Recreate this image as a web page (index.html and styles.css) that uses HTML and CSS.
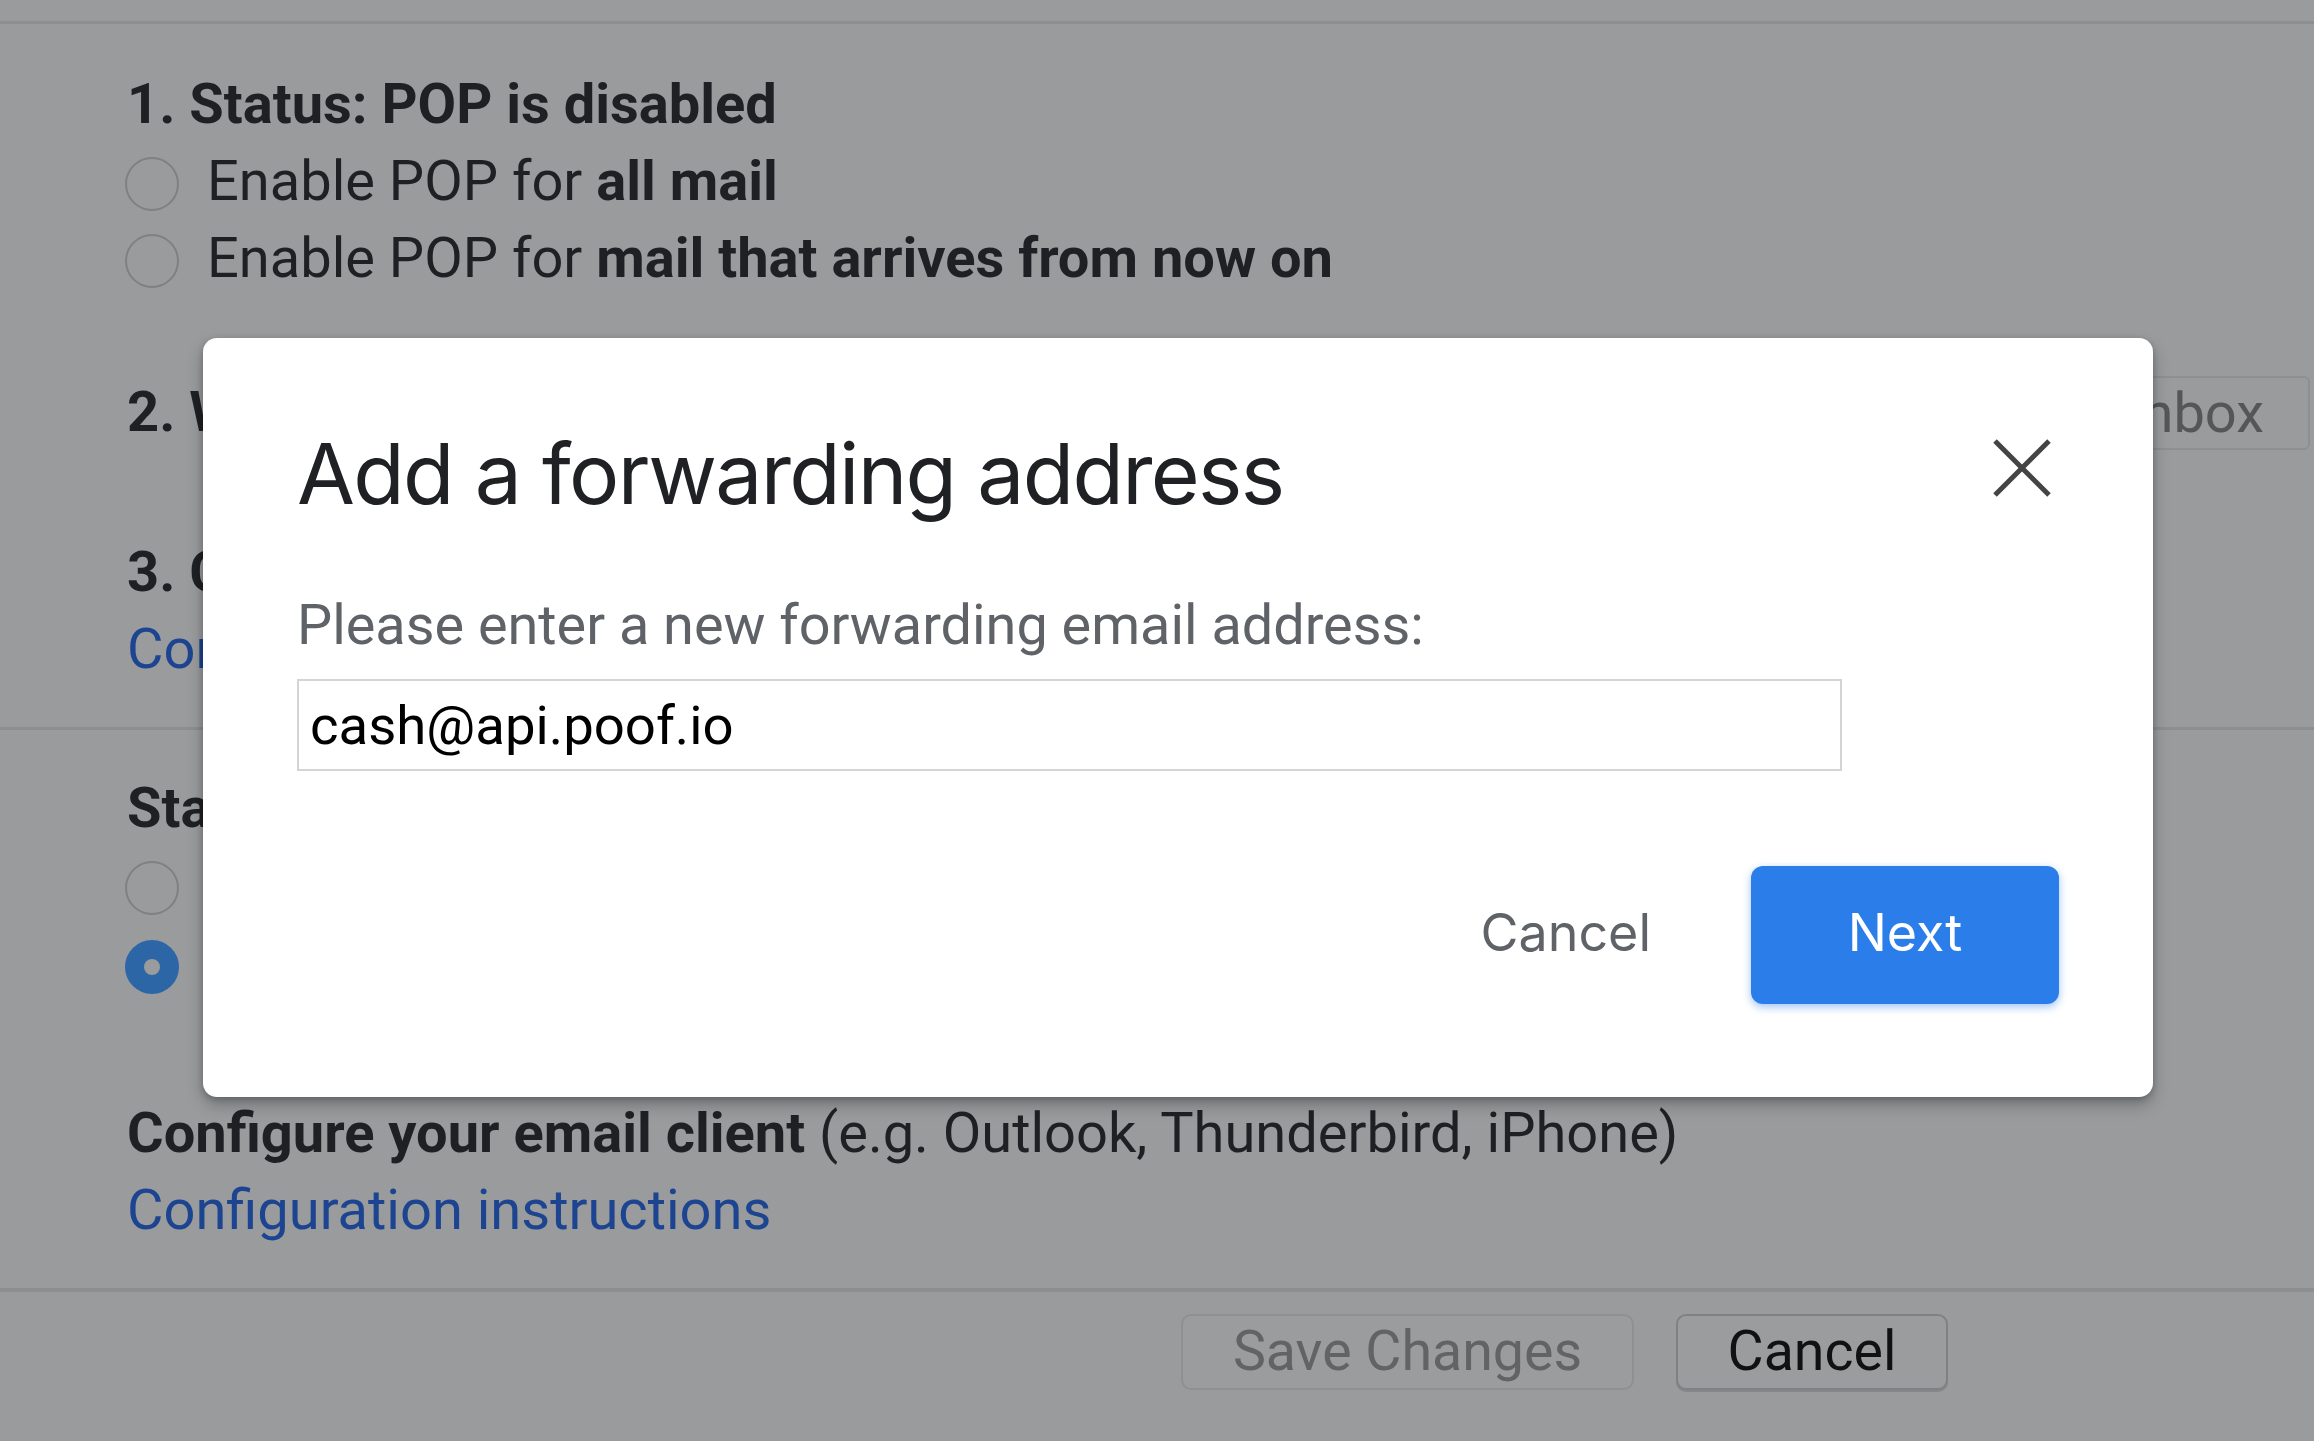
FILE: index.html
```html
<!DOCTYPE html>
<html lang="en">
<head>
<meta charset="utf-8">
<title>Forwarding and POP/IMAP</title>
<link rel="stylesheet" href="styles.css">
</head>
<body>
<div class="page">
  <div class="rule"></div>
  <section class="block pop">
    <div class="line"><b>1. Status: POP is disabled</b></div>
    <div class="opt"><span class="radio"></span><span>Enable POP for <b>all mail</b></span></div>
    <div class="opt"><span class="radio"></span><span>Enable POP for <b>mail that arrives from now on</b></span></div>
    <div class="line row2"><b>2. When messages are accessed with POP</b><span class="select">keep Gmail's copy in the Inbox</span></div>
    <div class="line row3"><b>3. Configure your email client</b> (e.g. Outlook, Eudora, Netscape Mail)</div>
    <div class="line"><a class="link">Configuration instructions</a></div>
  </section>
  <div class="rule mid"></div>
  <section class="block imap">
    <div class="line"><b>Status: IMAP is disabled</b></div>
    <div class="opt"><span class="radio"></span><span>Enable IMAP</span></div>
    <div class="opt"><span class="radio on"></span><span>Disable IMAP</span></div>
    <div class="line row4"><b>Configure your email client</b> (e.g. Outlook, Thunderbird, iPhone)</div>
    <div class="line"><a class="link">Configuration instructions</a></div>
  </section>
  <div class="rule bottom"></div>
  <div class="actions">
    <button class="btn save">Save Changes</button>
    <button class="btn cancel">Cancel</button>
  </div>
</div>

<div class="dialog" role="dialog">
  <div class="dhead">
    <h1 class="dtitle">Add a forwarding address</h1>
    <button class="close" aria-label="Close">
      <svg width="58" height="58" viewBox="0 0 58 58"><path d="M2 2 L56 56 M56 2 L2 56" stroke="#444" stroke-width="5" fill="none"/></svg>
    </button>
  </div>
  <p class="dsub">Please enter a new forwarding email address:</p>
  <div class="input">cash@api.poof.io</div>
  <div class="dfoot">
    <button class="dcancel">Cancel</button>
    <button class="next">Next</button>
  </div>
</div>
</body>
</html>
```

FILE: styles.css
```css
* { box-sizing: border-box; margin: 0; padding: 0; }
html, body { width: 2314px; height: 1441px; overflow: hidden; }
body {
  background: #9a9b9d;
  font-family: Roboto, "Liberation Sans", sans-serif;
  font-size: 56px;
  line-height: 77px;
  color: #1f2023;
  position: relative;
}
.rule { margin-top: 21px; height: 3px; background: #8d8e90; }
.rule.mid { margin-top: 39px; }
.rule.bottom { margin-top: 39px; height: 4px; }
.block { padding-left: 127px; }
.pop { padding-top: 42px; }
.imap { padding-top: 40px; }
.line { height: 77px; white-space: nowrap; }
.opt { height: 77px; display: flex; align-items: center; white-space: nowrap; }
.radio {
  width: 54px; height: 54px; border-radius: 50%;
  border: 2px solid #7f8082;
  margin-left: -2px; margin-right: 28px; margin-top: 5px;
  flex: none;
  position: relative;
}
.radio.on { background: #2d66a6; border-color: #2d66a6; margin-top: 8px; }
.radio.on::after {
  content: ""; position: absolute; left: 50%; top: 50%;
  width: 16px; height: 16px; margin: -8px 0 0 -8px;
  border-radius: 50%; background: #9a9b9d;
}
.row2 { margin-top: 77px; display: flex; align-items: center; padding-right: 4px; }
.select {
  margin-left: auto;
  height: 74px; line-height: 70px;
  border: 2px solid #8e8f91; border-radius: 6px;
  padding: 0 44px 0 20px;
  color: #555658;
}
.row3 { margin-top: 83px; }
.row4 { margin-top: 94px; }
.link { color: #1c4490; text-decoration: none; }
.actions { padding-top: 22px; padding-left: 1181px; display: flex; gap: 42px; }
.btn {
  font-family: Roboto, "Liberation Sans", sans-serif;
  font-size: 55.5px; height: 76px; line-height: 72px;
  padding: 0; border-radius: 10px;
  background: #9b9c9e; text-align: center;
}
.save { border: 2px solid #8f9092; color: #626365; width: 453px; }
.cancel { border: 2px solid #808183; color: #111; width: 272px; box-shadow: 0 2px 0 #86878a; }

.dialog {
  position: absolute; left: 203px; top: 338px;
  width: 1950px; height: 759px;
  background: #fff; border-radius: 14px;
  box-shadow: 0 8px 16px rgba(0,0,0,.25), 0 2px 6px rgba(0,0,0,.2);
  padding: 0 94px 93px;
  display: flex; flex-direction: column;
}
.dhead { display: flex; justify-content: space-between; align-items: flex-start; }
.dtitle {
  margin-top: 85px;
  font-family: Inter, Lato, sans-serif; font-weight: 400;
  font-size: 84px; line-height: 102px; color: #202124;
  letter-spacing: -1.7px;
}
.close {
  margin-top: 101px; margin-right: 8px;
  border: 0; background: none; width: 58px; height: 58px; display: block;
}
.close svg { display: block; }
.dsub { margin-top: 62px; color: #5f6368; font-size: 55.8px; line-height: 77px; }
.input {
  margin-top: 15px; width: 1545px; height: 92px;
  border: 2px solid #d4d4d4; padding-left: 11px;
  line-height: 88px; color: #000; font-size: 54.5px;
}
.dfoot { margin-top: 95px; display: flex; justify-content: flex-end; align-items: center; }
.dcancel {
  border: 0; background: none; color: #5f6368;
  font-family: Inter, Lato, sans-serif; font-size: 52px; line-height: 60px;
  margin-right: 100px; margin-top: -4px;
}
.next {
  width: 308px; height: 138px; border: 0; border-radius: 12px;
  background: #2b7de9; color: #fff;
  font-family: Inter, Lato, sans-serif; font-size: 52px; line-height: 130px;
  padding-bottom: 4px;
  box-shadow: 0 3px 8px rgba(43,125,233,.45);
}
```
